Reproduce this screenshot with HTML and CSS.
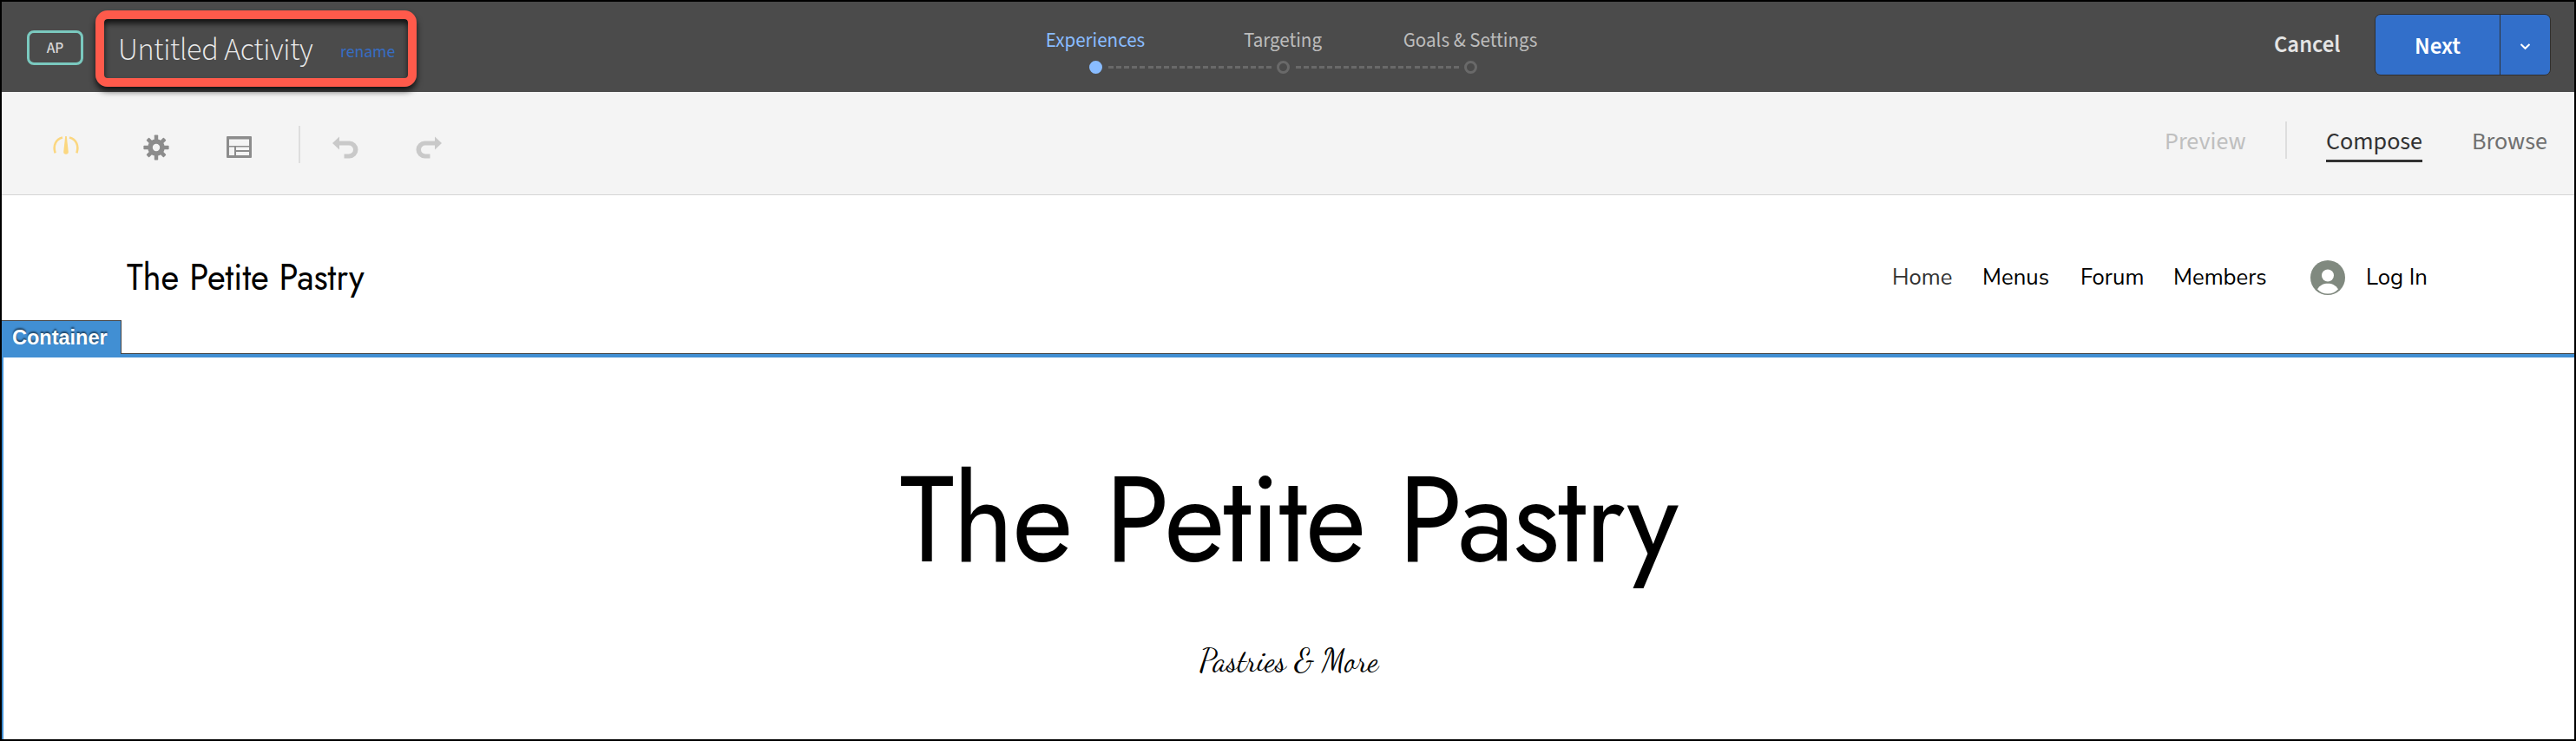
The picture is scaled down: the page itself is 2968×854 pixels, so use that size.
FILE: index.html
```html
<!DOCTYPE html>
<html lang="en">
<head>
<meta charset="utf-8">
<title>Untitled Activity</title>
<link rel="stylesheet" href="styles.css">
</head>
<body>
<div class="app">
  <header class="topbar">
    <div class="topbar-left">
      <span class="badge">AP</span>
      <div class="highlight">
        <h1 class="activity">Untitled Activity</h1>
        <a class="rename">rename</a>
      </div>
    </div>
    <ol class="steps">
      <li class="step active"><span class="step-label">Experiences</span><i class="dot"></i></li>
      <li class="step"><span class="step-label">Targeting</span><i class="dot"></i></li>
      <li class="step"><span class="step-label">Goals &amp; Settings</span><i class="dot"></i></li>
    </ol>
    <div class="actions">
      <span class="cancel">Cancel</span>
      <div class="split">
        <button class="next">Next</button>
        <button class="more" aria-label="More"><svg width="13" height="9" viewBox="0 0 13 9"><path d="M1.500 2l5 4.800 5-4.800" fill="none" stroke="#fff" stroke-width="2"/></svg></button>
      </div>
    </div>
  </header>

  <div class="toolbar">
    <div class="tools">
      <svg class="gauge" width="30" height="22" viewBox="0 0 30 22"><path d="M2.600 19.300C-.2 10.500 3.500 3.300 11 1.500M27.400 19.300C30.200 10.500 26.500 3.300 19 1.500" fill="none" stroke="#fbd780" stroke-width="2.600"/><path d="M14.200 0h1.600l2 18a2.800 2.800 0 1 1-5.600 0z" fill="#fbd780"/></svg>
      <svg class="gear" width="30" height="30" viewBox="-15 -15 30 30"><g fill="#8c8c8c"><rect x="-2.200" y="-14.600" width="4.400" height="29.200" rx=".8"/><rect x="-14.600" y="-2.200" width="29.200" height="4.400" rx=".8"/><rect x="-2.200" y="-14.100" width="4.400" height="28.200" rx=".8" transform="rotate(45)"/><rect x="-2.200" y="-14.100" width="4.400" height="28.200" rx=".8" transform="rotate(-45)"/><circle r="9.800"/></g><circle r="4.200" fill="#f4f4f4"/></svg>
      <svg class="layout" width="29" height="25" viewBox="0 0 29 25"><rect width="29" height="25" rx="1" fill="#8c8c8c"/><path fill="#f4f4f4" d="M3 3.500h23v7.500H3zM3 12.500h6v9.500H3zM11 12.500h15v3.500H11zM11 18h15v4H11z"/></svg>
      <span class="rule"></span>
      <svg class="undo" width="31" height="26" viewBox="0 0 31 26"><path d="M0 8L8 .5V5.500H19.500a10 10 0 0 1 0 20H13.500V20.500H19a5 5 0 0 0 0-10H8V15.500z" fill="#c9c9c9"/></svg>
      <svg class="redo" width="31" height="26" viewBox="0 0 31 26"><path d="M30 8L22 .5V5.500H10.500a10 10 0 0 0 0 20H16.500V20.500H11a5 5 0 0 1 0-10H22V15.500z" fill="#c9c9c9"/></svg>
    </div>
    <nav class="modes">
      <span class="mode preview">Preview</span>
      <span class="rule"></span>
      <span class="mode compose">Compose</span>
      <span class="mode browse">Browse</span>
    </nav>
  </div>

  <div class="site-head">
    <span class="logo">The Petite Pastry</span>
    <nav class="menu">
      <a class="home">Home</a><a class="menus">Menus</a><a class="forum">Forum</a><a class="members">Members</a>
      <svg class="avatar" width="40" height="40" viewBox="0 0 40 40"><circle cx="20" cy="20" r="20" fill="#80897f"/><circle cx="20" cy="17.500" r="7" fill="#fff"/><path d="M8 33.200C11 28.600 15 26.700 20 26.700s9 1.900 12 6.500C29 36.600 25 38.600 20 38.600S11 36.600 8 33.200z" fill="#fff"/></svg>
      <a>Log In</a>
    </nav>
  </div>

  <section class="hero">
    <span class="tag">Container</span>
    <h2 class="title">The Petite Pastry</h2>
    <p class="tagline">Pastries &amp; More</p>
  </section>
</div>
</body>
</html>
```
FILE: styles.css
```css
* { box-sizing: border-box; margin: 0; padding: 0; }
body {
  font-family: "Source Sans 3", "Open Sans", sans-serif;
  background: #fff;
  overflow: hidden;
}
.app {
  height: 854px;
  border: 2px solid #000;
  display: flex;
  flex-direction: column;
}
svg { display: block; flex: none; }

/* Top bar */
.topbar {
  height: 104px;
  flex: none;
  display: flex;
  background: #4b4b4b;
}
.topbar-left {
  width: 1152px;
  padding: 10px 0 0 29px;
  display: flex;
  align-items: flex-start;
}
.badge {
  width: 65px;
  height: 40px;
  margin-top: 23px;
  border: 3px solid #7ac9bf;
  border-radius: 8px;
  color: #d8d8d8;
  font-size: 17.500px;
  font-weight: 500;
  line-height: 36px;
  text-align: center;
}
.highlight {
  width: 370px;
  height: 88px;
  margin-left: 14px;
  border: 10px solid #ff5a4b;
  border-radius: 14px;
  padding-left: 16px;
  display: flex;
  box-shadow: 0 5px 7px rgba(0,0,0,.75), inset 0 5px 6px rgba(0,0,0,.75);
  z-index: 1;
}
.activity {
  width: 256px;
  font-size: 36px;
  font-weight: 300;
  line-height: 71px;
  letter-spacing: -.35px;
  color: #ececec;
  white-space: nowrap;
}
.rename {
  font-size: 19.700px;
  line-height: 76px;
  color: #376dc3;
}
.steps {
  display: grid;
  grid-template-columns: repeat(3, 216px);
  list-style: none;
  padding-top: 29px;
}
.step {
  position: relative;
  display: flex;
  flex-direction: column;
  align-items: center;
  color: #bcbcbc;
}
.step-label {
  font-size: 23px;
  line-height: 32px;
  white-space: nowrap;
}
.dot {
  width: 15px;
  height: 15px;
  margin-top: 7px;
  border: 3px solid #696969;
  border-radius: 50%;
}
.active { color: #89bcff; }
.active .dot { background: #89bcff; border-color: #89bcff; }
.step:not(:last-child)::after {
  content: "";
  position: absolute;
  left: 123px;
  top: 45px;
  width: 188px;
  height: 3px;
  background: repeating-linear-gradient(90deg, #696969 0 6px, transparent 6px 9.100px);
}
.actions {
  margin-left: auto;
  padding: 14px 27px 0 0;
  display: flex;
}
.cancel {
  width: 116px;
  font-size: 26.700px;
  font-weight: 600;
  line-height: 73px;
  color: #e4e4e4;
}
.split {
  width: 203px;
  height: 71px;
  display: flex;
  border: 1px solid #303030;
  border-radius: 7px;
  overflow: hidden;
}
.next, .more {
  border: 0;
  background: #326fca;
  color: #fff;
  font: 600 27px/69px "Source Sans 3", "Open Sans", sans-serif;
}
.next { width: 144px; padding-top: 2px; border-right: 1px solid #303030; }
.more {
  width: 57px;
  display: flex;
  align-items: center;
  justify-content: center;
  padding-top: 4px;
}

/* Editor toolbar */
.toolbar {
  height: 119px;
  flex: none;
  display: flex;
  justify-content: space-between;
  background: #f4f4f4;
  border-bottom: 1px solid #d5d5d5;
}
.tools {
  display: flex;
  align-items: center;
  padding: 9px 0 0 59px;
}
.gauge { margin-top: -4px; }
.gear { margin-left: 74px; }
.layout { margin-left: 66px; }
.rule { width: 2px; height: 43px; background: #dedede; }
.tools .rule { margin: -6px 37px 0 54px; }
.redo { margin-left: 65px; }
.modes {
  display: flex;
  padding-top: 34px;
  font-size: 28.100px;
}
.mode { height: 47px; line-height: 46px; }
.preview { width: 139px; color: #bfbfbf; }
.compose { width: 111px; margin-left: 45px; color: #323232; border-bottom: 3px solid #323232; }
.browse { width: 118px; margin-left: 57px; color: #707070; }

/* Edited page */
.site-head {
  height: 183px;
  flex: none;
  display: flex;
  justify-content: space-between;
  color: #000;
  padding: 65px 0 0 144px;
}
.logo {
  margin-top: 2px;
  font: 400 42px/56px Jost, Lato, sans-serif;
  height: 56px;
  letter-spacing: -.1px;
  transform: scaleX(.957);
  transform-origin: 0 50%;
}
.menu {
  display: flex;
  align-items: flex-start;
  width: 786px;
  font-family: "Nunito Sans", Lato, sans-serif;
  font-size: 25.700px;
  line-height: 60px;
  white-space: nowrap;
}
.home { width: 104px; color: #333; }
.menus { width: 113px; }
.forum { width: 107px; }
.members { width: 158px; }
.avatar { margin: 10px 24px 0 0; }

.hero {
  position: relative;
  flex: 1;
  border-top: 4px solid #418fd3;
  border-left: 2px solid #418fd3;
  box-shadow: 0 -1px 0 #444;
  display: flex;
  flex-direction: column;
  align-items: center;
  padding-top: 107px;
}
.tag {
  position: absolute;
  left: -2px;
  top: -43px;
  width: 138px;
  height: 39px;
  border-top: 1px solid #444;
  border-right: 1px solid #444;
  background: #418fd3;
  color: #fff;
  font: bold 23.500px/38px "Liberation Sans", Arial, sans-serif;
  padding-left: 12px;
  text-shadow: 0 -2px 2px rgba(0,0,0,.55);
}
.title {
  font: 400 140px/160px Jost, Lato, sans-serif;
  letter-spacing: -1.500px;
  color: #000;
  white-space: nowrap;
  transform: scaleX(.96);
}
.tagline {
  margin-top: 58px;
  font: 400 36px/50px "Dancing Script", "Liberation Serif", serif;
  color: #000;
}
```
